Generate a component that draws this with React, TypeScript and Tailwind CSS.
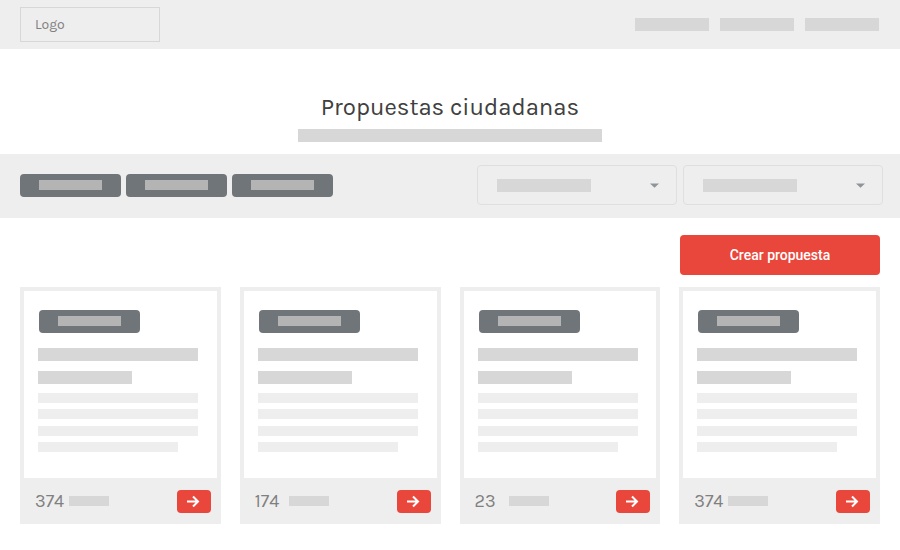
const cards = [
  { id: 1, votes: 374 },
  { id: 2, votes: 174 },
  { id: 3, votes: 23 },
  { id: 4, votes: 374 },
];

function TagBar() {
  return <span className="block h-[10px] w-[63px] bg-[#b4b4b4]" />;
}

function FilterButton({ label }: { label: string }) {
  return (
    <button
      type="button"
      aria-label={label}
      className="flex h-[23px] w-[101px] items-start justify-center rounded bg-[#70757a] pt-[6px]"
    >
      <TagBar />
    </button>
  );
}

function FilterSelect({ label }: { label: string }) {
  return (
    <div className="relative flex h-10 w-[200px] items-center justify-between pr-[18px] pl-5">
      <select
        aria-label={label}
        className="absolute inset-0 h-full w-full appearance-none rounded border border-[#dfdfdf] bg-transparent"
      >
        <option value="" />
      </select>
      <span className="pointer-events-none h-[13px] w-[94px] bg-[#d7d7d7]" />
      <svg
        className="pointer-events-none"
        width="9"
        height="5"
        viewBox="0 0 9 5"
        aria-hidden="true"
      >
        <path d="M0 0.4h9L4.5 4.8z" fill="#8f9499" />
      </svg>
    </div>
  );
}

function ProposalCard({ votes }: { votes: number }) {
  return (
    <article className="bg-[#eeeeee]">
      <div className="mx-1 border-t-4 border-[#eeeeee] bg-white px-[14px] pt-[19px] pb-[26px]">
        <div className="ml-px flex h-[23px] w-[101px] justify-center rounded bg-[#70757a] pt-[6px]">
          <TagBar />
        </div>
        <div className="mt-[15px] h-[13px] w-[160px] max-w-full bg-[#d7d7d7]" />
        <div className="mt-[10px] h-[13px] w-[94px] bg-[#d7d7d7]" />
        <div className="mt-[9px] h-[10px] w-[160px] max-w-full bg-[#eeeeee]" />
        <div className="mt-[6px] h-[10px] w-[160px] max-w-full bg-[#eeeeee]" />
        <div className="mt-[7px] h-[10px] w-[160px] max-w-full bg-[#eeeeee]" />
        <div className="mt-[6px] h-[10px] w-[140px] max-w-full bg-[#eeeeee]" />
      </div>
      <footer className="flex h-[46px] items-center pr-[10px] pl-[15px]">
        <span className="w-[34px] text-lg leading-6 text-[#808080]">
          {votes}
        </span>
        <span className="h-[10px] w-10 bg-[#d7d7d7]" />
        <button
          type="button"
          aria-label="Ver propuesta"
          className="ml-auto flex h-[23px] w-[34px] items-center justify-center rounded bg-[#e9473b]"
        >
          <svg
            width="14"
            height="13"
            viewBox="0 0 14 13"
            fill="none"
            stroke="white"
            strokeWidth="2"
            aria-hidden="true"
          >
            <path d="M0 6.5h11M6 1.5l5 5-5 5" />
          </svg>
        </button>
      </footer>
    </article>
  );
}

export default function App() {
  return (
    <div className="bg-white font-['Karla','Inter',sans-serif]">
      <header className="flex h-[49px] items-center justify-between bg-[#eeeeee] pr-[21px] pl-5">
        <a
          href="#inicio"
          className="flex h-[35px] w-[140px] items-center border border-[#d7d7d7] pl-[14px] text-sm text-[#808080]"
        >
          Logo
        </a>
        <nav className="flex gap-[11px]">
          <a href="#debates" aria-label="Debates" className="h-[13px] w-[74px] bg-[#d7d7d7]" />
          <a href="#propuestas" aria-label="Propuestas" className="h-[13px] w-[74px] bg-[#d7d7d7]" />
          <a href="#cuenta" aria-label="Mi cuenta" className="h-[13px] w-[74px] bg-[#d7d7d7]" />
        </nav>
      </header>

      <main>
        <section className="flex flex-col items-center pt-[42px] pb-3">
          <h1 className="text-2xl leading-8 text-[#404040]">Propuestas ciudadanas</h1>
          <div className="mt-[6px] h-[13px] w-[304px] bg-[#d7d7d7]" />
        </section>

        <section className="flex h-16 items-center justify-between bg-[#eeeeee] pr-[17px] pb-[2px] pl-5">
          <div className="flex gap-[5px]">
            <FilterButton label="Todas" />
            <FilterButton label="Recientes" />
            <FilterButton label="Destacadas" />
          </div>
          <div className="flex gap-[6px]">
            <FilterSelect label="Categoría" />
            <FilterSelect label="Distrito" />
          </div>
        </section>

        <section className="px-5 pt-[17px] pb-6">
          <div className="flex justify-end">
            <button
              type="button"
              className="h-10 w-[200px] rounded bg-[#e9473b] font-['Roboto',sans-serif] text-sm font-medium text-white"
            >
              Crear propuesta
            </button>
          </div>
          <div className="mt-3 grid grid-cols-4 gap-[19px]">
            {cards.map((card) => (
              <ProposalCard key={card.id} votes={card.votes} />
            ))}
          </div>
        </section>
      </main>
    </div>
  );
}
